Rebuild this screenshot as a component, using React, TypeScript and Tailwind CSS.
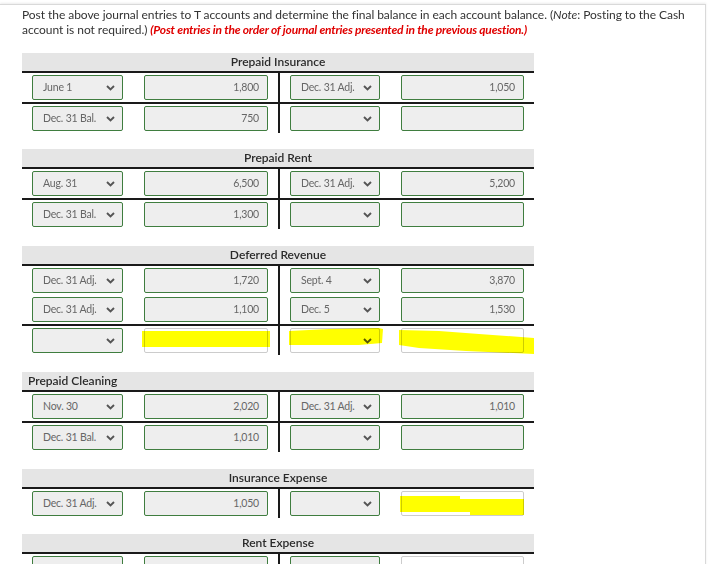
import React from "react";

type Cell = { v?: string; on: boolean };
type Row = { ld: Cell; la: Cell; rd: Cell; ra: Cell; line?: boolean };
type Account = { title: string; left?: boolean; gap: string; rows: Row[] };

const on = (v?: string): Cell => ({ v, on: true });
const off: Cell = { on: false };

const accounts: Account[] = [
  {
    title: "Prepaid Insurance",
    gap: "mt-[16px]",
    rows: [
      { ld: on("June 1"), la: on("1,800"), rd: on("Dec. 31 Adj."), ra: on("1,050") },
      { ld: on("Dec. 31 Bal."), la: on("750"), rd: on(), ra: on(), line: true },
    ],
  },
  {
    title: "Prepaid Rent",
    gap: "mt-[16px]",
    rows: [
      { ld: on("Aug. 31"), la: on("6,500"), rd: on("Dec. 31 Adj."), ra: on("5,200") },
      { ld: on("Dec. 31 Bal."), la: on("1,300"), rd: on(), ra: on(), line: true },
    ],
  },
  {
    title: "Deferred Revenue",
    gap: "mt-[17px]",
    rows: [
      { ld: on("Dec. 31 Adj."), la: on("1,720"), rd: on("Sept. 4"), ra: on("3,870") },
      { ld: on("Dec. 31 Adj."), la: on("1,100"), rd: on("Dec. 5"), ra: on("1,530") },
      { ld: on(), la: off, rd: off, ra: off, line: true },
    ],
  },
  {
    title: "Prepaid Cleaning",
    left: true,
    gap: "mt-[17px]",
    rows: [
      { ld: on("Nov. 30"), la: on("2,020"), rd: on("Dec. 31 Adj."), ra: on("1,010") },
      { ld: on("Dec. 31 Bal."), la: on("1,010"), rd: on(), ra: on(), line: true },
    ],
  },
  {
    title: "Insurance Expense",
    gap: "mt-[17px]",
    rows: [{ ld: on("Dec. 31 Adj."), la: on("1,050"), rd: on(), ra: off }],
  },
  {
    title: "Rent Expense",
    gap: "mt-[16px]",
    rows: [{ ld: on(), la: on(), rd: on(), ra: off }],
  },
];

// marker strokes drawn over some empty boxes, keyed "account-row-col"
const marks: Record<string, { x: number; y: number; w: number; h: number; pts: string }> = {
  "2-2-la": { x: -2, y: 3, w: 128, h: 17, pts: "0,0 128,0 128,16 0,16" },
  "2-2-rd": { x: -1, y: 0, w: 95, h: 19, pts: "0,3 40,1 90,0 94,1 93,15 70,17 30,17 0,17" },
  "2-2-ra": { x: -2, y: 2, w: 136, h: 24, pts: "0,0 40,1 80,4 135,8 135,24 67,21 20,18 0,15" },
  "4-0-ra": { x: -1, y: 5, w: 125, h: 20, pts: "0,0 60,0 60,3 124,3 124,19 70,19 70,16 0,16" },
};

function Chevron() {
  return (
    <svg width="9" height="6" viewBox="0 0 9 6" className="shrink-0">
      <path d="M1 1 L4.5 4.5 L8 1" fill="none" stroke="#555" strokeWidth="1.9" />
    </svg>
  );
}

function Mark({ id }: { id: string }) {
  const m = marks[id];
  if (!m) return null;
  return (
    <svg
      className="absolute mix-blend-multiply pointer-events-none overflow-visible"
      style={{ left: m.x, top: m.y }}
      width={m.w}
      height={m.h}
    >
      <polygon points={m.pts} fill="#ffff00" />
    </svg>
  );
}

function Select({ c, w, id }: { c: Cell; w: string; id: string }) {
  const box = c.on ? "border-[#3f7d3f] bg-[#eeeeee]" : "border-[#cccccc] bg-white";
  return (
    <div className={`relative ${w} h-[25px] shrink-0`}>
      <div className={`flex items-center justify-between h-full border rounded-[2px] pl-[10px] pr-[7px] ${box}`}>
        <span className="text-[10.5px] text-[#666] tracking-[-0.2px]">{c.v ?? ""}</span>
        <Chevron />
      </div>
      <Mark id={id} />
    </div>
  );
}

function Amount({ c, w, id }: { c: Cell; w: string; id: string }) {
  const box = c.on ? "border-[#3f7d3f] bg-[#eeeeee]" : "border-[#cccccc] bg-white";
  return (
    <div className={`relative ${w} h-[25px] shrink-0`}>
      <div className={`flex items-center justify-end h-full border rounded-[2px] pr-[8px] ${box}`}>
        <span className="text-[10.5px] text-[#666] tracking-[-0.2px]">{c.v ?? ""}</span>
      </div>
      <Mark id={id} />
    </div>
  );
}

function TAccount({ a, ai }: { a: Account; ai: number }) {
  return (
    <div className={`w-[512px] ${a.gap}`}>
      <div
        className={`h-[20px] bg-[#e5e5e5] border-b-2 border-[#1a1a1a] flex items-center text-[12px] font-semibold text-[#2a2a2a] ${
          a.left ? "pl-[6px]" : "justify-center"
        }`}
      >
        {a.title}
      </div>
      {a.rows.map((r, ri) => (
        <div key={ri} className={`flex ${r.line ? "border-t-2 border-[#1a1a1a]" : ""}`}>
          <div className="w-[256px] flex gap-[21px] pl-[10px] py-[2px]">
            <Select c={r.ld} w="w-[91px]" id={`${ai}-${ri}-ld`} />
            <Amount c={r.la} w="w-[124px]" id={`${ai}-${ri}-la`} />
          </div>
          <div className="w-[256px] flex gap-[21px] pl-[10px] py-[2px] border-l-2 border-[#1a1a1a]">
            <Select c={r.rd} w="w-[90px]" id={`${ai}-${ri}-rd`} />
            <Amount c={r.ra} w="w-[123px]" id={`${ai}-${ri}-ra`} />
          </div>
        </div>
      ))}
    </div>
  );
}

export default function App() {
  return (
    <div className="h-[564px] overflow-hidden bg-white pt-[4px]" style={{ fontFamily: "Lato, 'Noto Sans', sans-serif" }}>
      <div className="w-[706px] border-t border-r border-[#d9d9d9] shadow-[0_-1px_2px_rgba(0,0,0,0.08)] pl-[22px] pt-[2px] min-h-[600px]">
        <p className="text-[12px] leading-[15px] text-[#333] tracking-[-0.05px] w-[684px]">
          Post the above journal entries to T accounts and determine the final balance in each account balance. (<i>Note</i>:
          Posting to the Cash account is not required.){" "}
          <b className="italic text-[#e00000] tracking-[-0.2px]">
            (Post entries in the order of journal entries presented in the previous question.)
          </b>
        </p>
        <div className="flex flex-col">
          {accounts.map((a, i) => (
            <TAccount key={a.title} a={a} ai={i} />
          ))}
        </div>
      </div>
    </div>
  );
}
